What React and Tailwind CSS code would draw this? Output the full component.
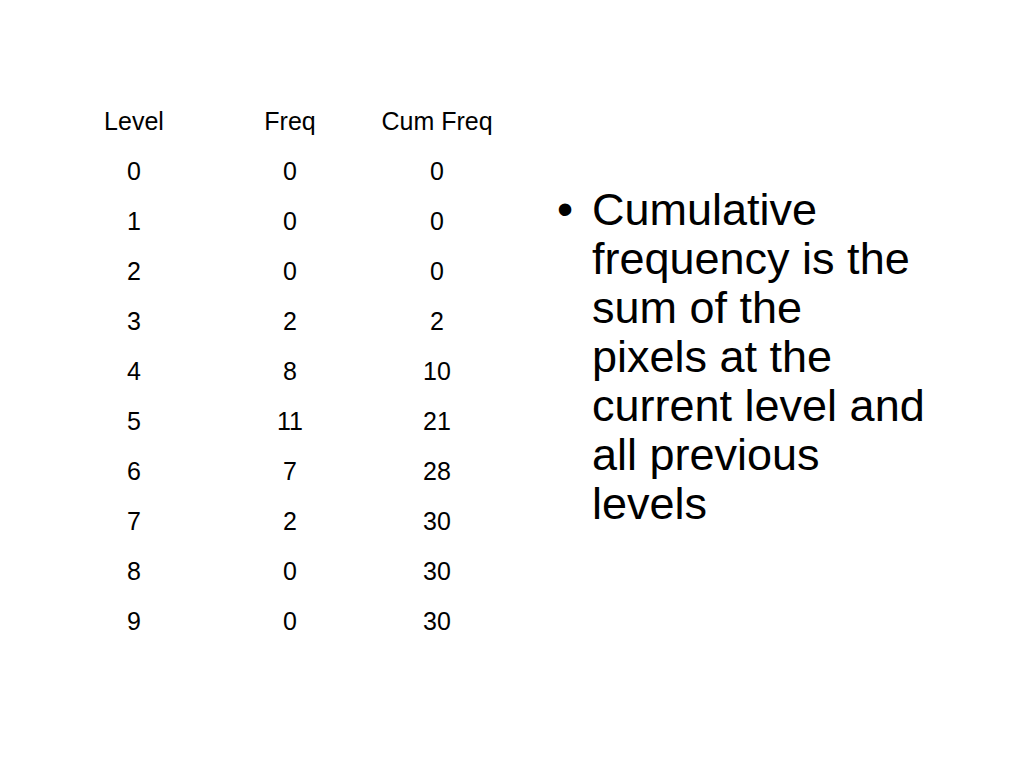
const rows = [
  ["0", "0", "0"],
  ["1", "0", "0"],
  ["2", "0", "0"],
  ["3", "2", "2"],
  ["4", "8", "10"],
  ["5", "11", "21"],
  ["6", "7", "28"],
  ["7", "2", "30"],
  ["8", "0", "30"],
  ["9", "0", "30"],
];

const lines = [
  "Cumulative",
  "frequency is the",
  "sum of the",
  "pixels at the",
  "current level and",
  "all previous",
  "levels",
];

export default function App() {
  return (
    <div className="w-[1024px] h-[768px] bg-white text-black flex font-['Liberation_Sans',Arial,sans-serif]">
      {/* Table */}
      <div className="pl-[56px] pt-[96px]">
        <div className="grid grid-cols-[156px_156px_138px] text-[25px] leading-[50px] text-center">
          <div>Level</div>
          <div>Freq</div>
          <div>Cum Freq</div>
          {rows.map((r, i) => (
            <div key={i} className="contents">
              <div>{r[0]}</div>
              <div>{r[1]}</div>
              <div>{r[2]}</div>
            </div>
          ))}
        </div>
      </div>

      {/* Bullet text */}
      <div className="pl-[51px] pt-[185px] flex text-[45px] leading-[49px]">
        <span className="w-[35px] text-[46px]">•</span>
        <div className="whitespace-nowrap">
          {lines.map((l) => (
            <div key={l}>{l}</div>
          ))}
        </div>
      </div>
    </div>
  );
}
